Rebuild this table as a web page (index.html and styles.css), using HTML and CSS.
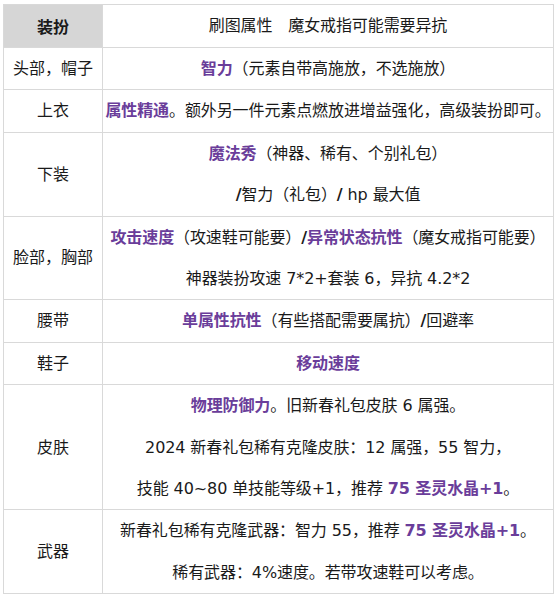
FILE: index.html
```html
<!DOCTYPE html>
<html lang="zh-CN">
<head>
<meta charset="utf-8">
<title>装扮属性</title>
<link rel="stylesheet" href="styles.css">
</head>
<body>
<div class="wrap">
<table class="gear">
  <colgroup><col class="c1"><col class="c2"></colgroup>
  <tr>
    <th class="hd-left">装扮</th>
    <td class="hd-right"><p>刷图属性　魔女戒指可能需要异抗</p></td>
  </tr>
  <tr>
    <td class="part">头部，帽子</td>
    <td><p><b class="hl">智力</b>（元素自带高施放，不选施放）</p></td>
  </tr>
  <tr>
    <td class="part">上衣</td>
    <td><p><b class="hl">属性精通</b>。额外另一件元素点燃放进增益强化，高级装扮即可。</p></td>
  </tr>
  <tr>
    <td class="part">下装</td>
    <td><p><b class="hl">魔法秀</b>（神器、稀有、个别礼包）</p><p><b>/</b>智力（礼包）<b>/</b> hp 最大值</p></td>
  </tr>
  <tr>
    <td class="part">脸部，胸部</td>
    <td><p><b class="hl">攻击速度</b>（攻速鞋可能要）<b>/</b><b class="hl">异常状态抗性</b>（魔女戒指可能要）</p><p>神器装扮攻速 7*2+套装 6，异抗 4.2*2</p></td>
  </tr>
  <tr>
    <td class="part">腰带</td>
    <td><p><b class="hl">单属性抗性</b>（有些搭配需要属抗）<b>/</b>回避率</p></td>
  </tr>
  <tr>
    <td class="part">鞋子</td>
    <td><p><b class="hl">移动速度</b></p></td>
  </tr>
  <tr>
    <td class="part">皮肤</td>
    <td><p><b class="hl">物理防御力</b>。旧新春礼包皮肤 6 属强。</p><p>2024 新春礼包稀有克隆皮肤：12 属强，55 智力，</p><p>技能 40~80 单技能等级+1，推荐 <b class="hl">75 圣灵水晶+1</b>。</p></td>
  </tr>
  <tr>
    <td class="part">武器</td>
    <td><p>新春礼包稀有克隆武器：智力 55，推荐 <b class="hl">75 圣灵水晶+1</b>。</p><p>稀有武器：4%速度。若带攻速鞋可以考虑。</p></td>
  </tr>
</table>
</div>
</body>
</html>
```
FILE: styles.css
```css
html, body {
  margin: 0;
  padding: 0;
  background: #ffffff;
}
.wrap {
  padding: 4px 0 0 3px;
}
.gear {
  border-collapse: collapse;
  width: 550px;
  table-layout: fixed;
  font-family: "DejaVu Sans", "Noto Sans CJK SC", sans-serif;
  font-size: 16px;
  color: #1a1a1a;
}
.c1 { width: 99px; }
.c2 { width: 451px; }
.gear th, .gear td {
  border: 1px solid #d9d9d9;
  padding: 0;
  text-align: center;
  vertical-align: middle;
}
.gear p {
  margin: 0;
  line-height: 41.4px;
  white-space: nowrap;
  letter-spacing: -0.1px;
}
.hd-left {
  background: #d6d6d6;
  font-weight: bold;
  height: 42px;
}
.hd-right {
  background: #ffffff;
}
.part {
  line-height: 41.4px;
}
.gear b {
  font-weight: bold;
}
.hl {
  color: #6a3d9a;
}
```
